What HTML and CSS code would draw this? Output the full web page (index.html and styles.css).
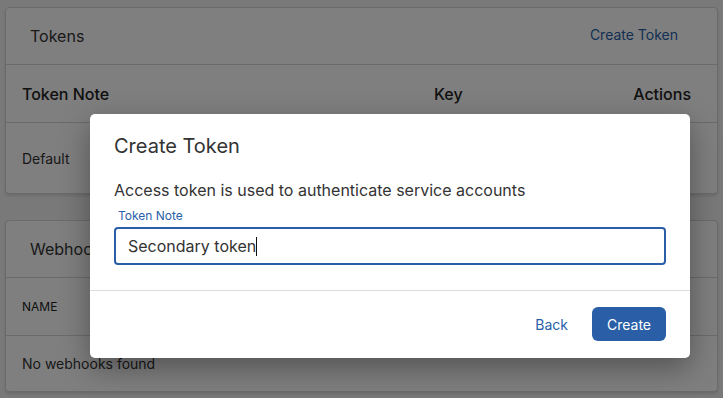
FILE: index.html
```html
<!DOCTYPE html>
<html lang="en">
<head>
    <meta charset="UTF-8">
    <meta name="viewport" content="width=device-width, initial-scale=1.0">
    <title>Access Tokens</title>
    <link rel="stylesheet" href="styles.css">
</head>
<body>
    <div class="page">
        <section class="card">
            <div class="card-header">
                <span class="card-title">Tokens</span>
                <a class="link-button" href="#">Create Token</a>
            </div>
            <div class="table-row table-head">
                <span>Token Note</span>
                <span>Key</span>
                <span class="col-actions">Actions</span>
            </div>
            <div class="table-row table-body tall">
                <span class="cell-small">Default</span>
                <span></span>
                <span></span>
            </div>
        </section>

        <section class="card">
            <div class="card-header">
                <span class="card-title">Webhooks</span>
            </div>
            <div class="table-row table-caps">
                <span>NAME</span>
            </div>
            <div class="table-row table-body">
                <span class="cell-small">No webhooks found</span>
            </div>
        </section>
    </div>

    <div class="overlay"></div>

    <div class="modal">
        <div class="modal-body">
            <h2>Create Token</h2>
            <p class="modal-text">Access token is used to authenticate service accounts</p>
            <label class="field-label" for="note">Token Note</label>
            <div class="field-input">Secondary token<span class="caret"></span></div>
        </div>
        <div class="modal-footer">
            <button class="btn-text" type="button">Back</button>
            <button class="btn-primary" type="button">Create</button>
        </div>
    </div>
</body>
</html>
```

FILE: styles.css
```css
* {
    margin: 0;
    padding: 0;
    box-sizing: border-box;
}

body {
    font-family: Inter, "Noto Sans", sans-serif;
    background-color: #f3f3f3;
    color: #222;
    width: 723px;
    height: 398px;
    overflow: hidden;
    position: relative;
}

.page {
    padding: 7px 5px;
    display: flex;
    flex-direction: column;
    gap: 26px;
}

.card {
    background-color: white;
    border: 1px solid #d6d6d6;
    border-radius: 4px;
    box-shadow: 0 2px 3px rgba(0, 0, 0, 0.12);
}

.card-header {
    height: 57px;
    padding: 0 24px;
    display: flex;
    justify-content: space-between;
    align-items: center;
    border-bottom: 1px solid #d6d6d6;
}

.card-title {
    font-size: 16px;
    color: #333;
}

.link-button {
    color: #2a5fa8;
    font-size: 14px;
    text-decoration: none;
    padding: 0 15px 4px 0;
}

.table-row {
    height: 57px;
    padding: 0 26px 0 16px;
    display: grid;
    grid-template-columns: 412px 1fr 100px;
    align-items: center;
}

.table-row + .table-row {
    border-top: 1px solid #d6d6d6;
}

.table-head {
    font-size: 16px;
    font-weight: 500;
    color: #222;
}

.col-actions {
    text-align: right;
}

.table-body {
    height: 56px;
}

.table-body.tall {
    height: 71px;
}

.cell-small {
    font-size: 14px;
    color: #333;
    white-space: nowrap;
}

.table-caps {
    font-size: 12px;
    font-weight: 400;
    color: #222;
}

.overlay {
    position: absolute;
    inset: 0;
    background-color: rgba(0, 0, 0, 0.5);
}

.modal {
    position: absolute;
    left: 90px;
    top: 114px;
    width: 600px;
    background-color: white;
    border-radius: 5px;
    box-shadow: 0 10px 30px rgba(0, 0, 0, 0.35);
}

.modal-body {
    padding: 20px 24px 25px 24px;
}

.modal-body h2 {
    font-size: 20px;
    font-weight: 400;
    line-height: 24px;
    color: #333;
}

.modal-text {
    margin-top: 20px;
    font-size: 16px;
    line-height: 24px;
    color: #333;
}

.field-label {
    display: block;
    margin-top: 7px;
    padding-left: 4px;
    font-size: 12px;
    line-height: 14px;
    color: #2a5fa8;
}

.field-input {
    margin-top: 4px;
    height: 38px;
    border: 2px solid #2a5fa8;
    border-radius: 4px;
    padding: 0 12px;
    display: flex;
    align-items: center;
    font-size: 16px;
    color: #333;
}

.caret {
    display: inline-block;
    width: 1px;
    height: 19px;
    background-color: #111;
}

.modal-footer {
    border-top: 1px solid #dcdcdc;
    padding: 16px 24px 17px 24px;
    display: flex;
    justify-content: flex-end;
    align-items: center;
    gap: 8px;
}

.btn-text {
    background: none;
    border: none;
    font-family: inherit;
    font-size: 14px;
    color: #2a5fa8;
    padding: 0 16px;
    height: 34px;
    cursor: pointer;
}

.btn-primary {
    background-color: #2a5fa8;
    border: none;
    border-radius: 6px;
    font-family: inherit;
    font-size: 14px;
    color: white;
    padding: 0 15px;
    height: 34px;
    cursor: pointer;
}
```
